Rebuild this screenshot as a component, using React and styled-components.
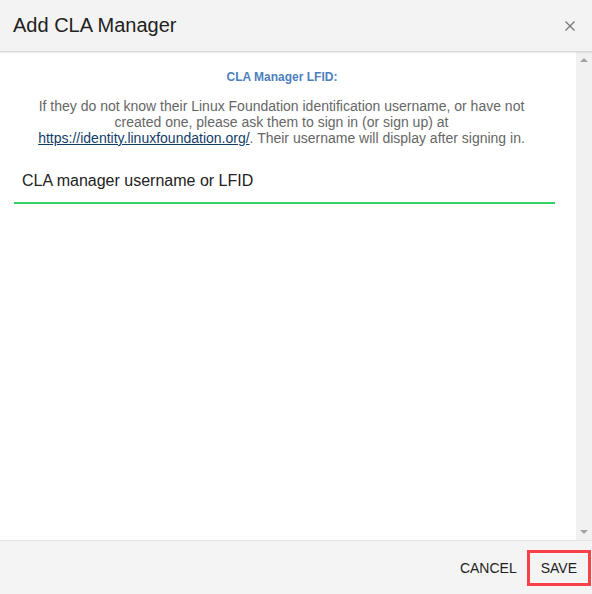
import React from 'react';
import styled, {createGlobalStyle} from 'styled-components';

const GlobalStyle = createGlobalStyle`
    html, body {
        margin: 0;
        padding: 0;
        background: #fff;
        font-family: "Liberation Sans", Arial, sans-serif;
    }
`

const Modal = styled.div`
    width: 592px;
    height: 594px;
    display: flex;
    flex-direction: column;
    background: #fff;
    overflow: hidden;
`

const Header = styled.div`
    height: 52px;
    flex-shrink: 0;
    display: flex;
    align-items: center;
    justify-content: space-between;
    padding: 0 16px 0 13px;
    background: #f3f3f3;
    border-bottom: 1px solid #d6d6d6;
    box-shadow: 0 1px 2px rgba(0,0,0,0.08);
    box-sizing: border-box;
    position: relative;
    z-index: 1;
`

const Title = styled.h4`
    margin: 0;
    font-size: 20px;
    font-weight: normal;
    color: #222;
`

const Close = styled.button`
    border: none;
    background: none;
    padding: 0;
    width: 12px;
    height: 12px;
    display: flex;
    cursor: pointer;
`

const Body = styled.div`
    flex: 1;
    display: flex;
    min-height: 0;
`

const Content = styled.div`
    flex: 1;
    padding: 17px 21px 0 14px;
`

const Scrollbar = styled.div`
    width: 16px;
    background: #f1f1f1;
    display: flex;
    flex-direction: column;
    justify-content: space-between;
    align-items: center;
    padding: 6px 0;
    box-sizing: border-box;
`

const Arrow = styled.div`
    width: 0;
    height: 0;
    border-left: 4px solid transparent;
    border-right: 4px solid transparent;
    ${p => p.down
        ? 'border-top: 4px solid #a3a3a3;'
        : 'border-bottom: 4px solid #a3a3a3;'}
`

const Label = styled.div`
    margin-right: 5px;
    text-align: center;
    font-size: 12px;
    font-weight: bold;
    color: #4d7fbf;
    line-height: 16px;
`

const Help = styled.p`
    margin: 13px 6px 0 0;
    text-align: center;
    font-size: 14px;
    line-height: 16px;
    color: #666;
    white-space: nowrap;
    a {
        color: #123d6a;
        text-decoration: underline;
    }
`

const Field = styled.div`
    margin-top: 25px;
    border-bottom: 2px solid #35d363;
    padding: 0 8px 11px;
`

const Input = styled.input`
    border: none;
    outline: none;
    width: 100%;
    padding: 0;
    font-family: "Liberation Sans", Arial, sans-serif;
    font-size: 16px;
    line-height: 20px;
    height: 20px;
    color: #222;
    background: transparent;
    &::placeholder {
        color: #222;
        opacity: 1;
    }
`

const Footer = styled.div`
    height: 54px;
    flex-shrink: 0;
    display: flex;
    align-items: center;
    justify-content: flex-end;
    gap: 4px;
    padding: 0 1px 0 0;
    background: #f4f4f4;
    border-top: 1px solid #e3e3e3;
    box-sizing: border-box;
`

const Button = styled.button`
    background: none;
    font-family: "Liberation Sans", Arial, sans-serif;
    font-size: 14px;
    color: #222;
    height: 36px;
    padding: 0 ${p => p.highlight ? '11px' : '3px'};
    border: 3px solid ${p => p.highlight ? '#fa4147' : 'transparent'};
    cursor: pointer;
`

function App() {
    return (
        <>
            <GlobalStyle/>
            <Modal>
                <Header>
                    <Title>Add CLA Manager</Title>
                    <Close aria-label="close">
                        <svg width="12" height="12" viewBox="0 0 12 12">
                            <path d="M1.5 1.5 L10.5 10.5 M10.5 1.5 L1.5 10.5" stroke="#777" strokeWidth="1.3"/>
                        </svg>
                    </Close>
                </Header>
                <Body>
                    <Content>
                        <Label>CLA Manager LFID:</Label>
                        <Help>
                            If they do not know their Linux Foundation identification username, or have not<br/>
                            created one, please ask them to sign in (or sign up) at<br/>
                            <a href="#">https://identity.linuxfoundation.org/</a>. Their username will display after signing in.
                        </Help>
                        <Field>
                            <Input placeholder="CLA manager username or LFID"/>
                        </Field>
                    </Content>
                    <Scrollbar>
                        <Arrow/>
                        <Arrow down/>
                    </Scrollbar>
                </Body>
                <Footer>
                    <Button>CANCEL</Button>
                    <Button highlight>SAVE</Button>
                </Footer>
            </Modal>
        </>
    );
}

export default App;
